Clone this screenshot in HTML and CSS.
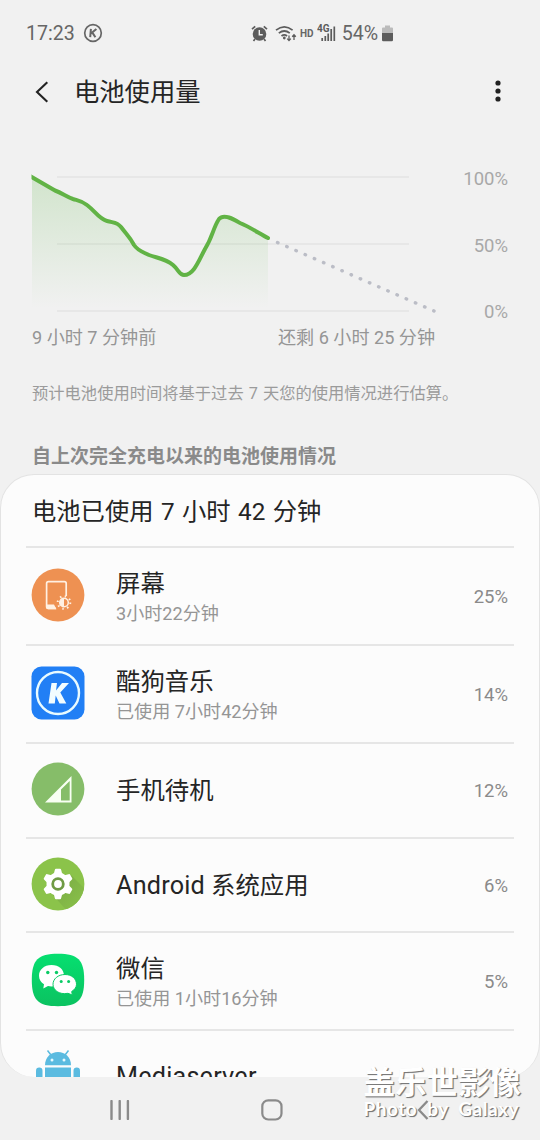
FILE: index.html
```html
<!DOCTYPE html>
<html lang="zh-CN">
<head>
    <meta charset="UTF-8">
    <title>电池使用量</title>
    <meta name="viewport" content="width=device-width, initial-scale=1">
    <link rel="stylesheet" href="styles.css">
</head>
<body>
    <header class="status-bar">
        <span class="clock">17:23</span>
        <svg class="kugou-status" width="20" height="20" viewBox="0 0 20 20">
            <circle cx="10" cy="10" r="8.3" fill="none" stroke="#666" stroke-width="1.7"/>
            <path d="M7.9 5.8L7.2 14.2M13.4 6L7.9 10.6M9.4 9.6L12.4 14.2" fill="none" stroke="#666" stroke-width="2"/>
        </svg>
        <div class="status-right">
            <svg width="17" height="17" viewBox="0 0 17 17">
                <circle cx="8.5" cy="9" r="6.8" fill="#5c5c5c"/>
                <path d="M1 4.2L4.2 1.4M16 4.2L12.8 1.4M4 14L2.5 16M13 14L14.5 16" stroke="#5c5c5c" stroke-width="1.7"/>
                <path d="M8.3 5V9.7H11.8" fill="none" stroke="#f1f1f1" stroke-width="1.4"/>
            </svg>
            <svg class="wifi" width="22" height="17" viewBox="0 0 22 17">
                <g fill="none" stroke="#5c5c5c" stroke-width="1.7">
                    <path d="M1 5.2Q9.3 -1.6 17.6 5.2"/>
                    <path d="M3.8 8.2Q9.3 3.8 14.8 8.2"/>
                    <path d="M6.5 11Q9.3 8.8 12.1 11"/>
                </g>
                <circle cx="9.3" cy="13" r="1.4" fill="#5c5c5c"/>
                <path d="M14 10.5V15.4M12.2 13.6L14 15.6L15.8 13.6M19 15V9.8M17.2 11.7L19 9.7L20.8 11.7" fill="none" stroke="#5c5c5c" stroke-width="1.3"/>
            </svg>
            <span class="hd">HD</span>
            <svg class="signal" width="19" height="18" viewBox="0 0 19 18">
                <text x="0" y="8" class="net-type">4G</text>
                <path d="M5.2 14V17M8.3 12V17M11.2 9.5V17M14.2 5V17M17.3 2.5V17" stroke="#5c5c5c" stroke-width="1.7"/>
            </svg>
            <span class="level">54%</span>
            <svg width="11" height="17" viewBox="0 0 11 17">
                <path d="M3 0.5H8V2.5H10Q11 2.5 11 3.5V8H0V3.5Q0 2.5 1 2.5H3Z" fill="#bbb"/>
                <path d="M0 8H11V15Q11 16.3 9.7 16.3H1.3Q0 16.3 0 15Z" fill="#5c5c5c"/>
            </svg>
        </div>
    </header>

    <nav class="title-bar">
        <svg width="14" height="22" viewBox="0 0 14 22">
            <path d="M12.3 1.2L2 11L12.3 20.8" fill="none" stroke="#222" stroke-width="2.1"/>
        </svg>
        <h1 class="title">电池使用量</h1>
        <svg class="more" width="6" height="22" viewBox="0 0 6 22">
            <circle cx="3" cy="3" r="2.6" fill="#222"/>
            <circle cx="3" cy="11" r="2.6" fill="#222"/>
            <circle cx="3" cy="19" r="2.6" fill="#222"/>
        </svg>
    </nav>

    <section class="chart">
        <svg width="408" height="150" viewBox="30 168 408 150">
            <defs>
                <linearGradient id="fade" x1="0" y1="176" x2="0" y2="308" gradientUnits="userSpaceOnUse">
                    <stop offset="0" stop-color="#61b74a" stop-opacity="0.22"/>
                    <stop offset="1" stop-color="#61b74a" stop-opacity="0"/>
                </linearGradient>
                <clipPath id="plot"><rect x="31.5" y="168" width="407" height="150"/></clipPath>
            </defs>
            <path d="M57 177H409M57 244H409M57 311H409" stroke="#e3e3e3" stroke-width="1.3"/>
            <path d="M32 177L55 190.500C62 193 67 197 73 199C80 201 82 201 87 205C95 211 99 219 107 221C114 223 117 222 121 227C127 235 130 237 134 245C138 251 143 252 149 255C157 258 166 259 173 265C179 270 179 275 184 275C194 275 199 260 205 249C213 236 213 228 219 219C224 213 235 220 240 223C250 227 260 234 268 238V308H32Z" fill="url(#fade)"/>
            <path clip-path="url(#plot)" d="M30 176L55 190.500C62 193 67 197 73 199C80 201 82 201 87 205C95 211 99 219 107 221C114 223 117 222 121 227C127 235 130 237 134 245C138 251 143 252 149 255C157 258 166 259 173 265C179 270 179 275 184 275C194 275 199 260 205 249C213 236 213 228 219 219C224 213 235 220 240 223C250 227 260 234 268 238" fill="none" stroke="#61b345" stroke-width="4" stroke-linecap="round" stroke-linejoin="round"/>
            <path d="M277.500 242.500L434 311" fill="none" stroke="#bbbdc6" stroke-width="3.4" stroke-linecap="round" stroke-dasharray="0.5 9.530"/>
        </svg>
        <div class="y-axis">
            <span>100%</span>
            <span>50%</span>
            <span>0%</span>
        </div>
    </section>
    <div class="x-axis">
        <span>9 小时 7 分钟前</span>
        <span>还剩 6 小时 25 分钟</span>
    </div>
    <p class="estimate">预计电池使用时间将基于过去 7 天您的使用情况进行估算。</p>
    <h2 class="section-title">自上次完全充电以来的电池使用情况</h2>

    <main class="card">
        <div class="card-title">电池已使用 7 小时 42 分钟</div>
        <div class="row">
            <svg class="icon" viewBox="0 0 54 54">
                <circle cx="27" cy="27" r="26.4" fill="#ee9152"/>
                <path d="M35.200 28V15.500Q35.200 13.600 33.300 13.600H17.500Q15.600 13.600 15.600 15.500V38.500Q15.600 40.400 17.500 40.400H25" fill="none" stroke="#fff0e2" stroke-width="1.7"/>
                <path d="M15 36.500H23L25.500 41.200H17Q15 41.200 15 39Z" fill="#fff0e2"/>
                <circle cx="33" cy="34.500" r="4.300" fill="none" stroke="#fff0e2" stroke-width="1.500"/>
                <path d="M33 30.200A4.300 4.300 0 0 0 33 38.800Z" fill="#fff0e2"/>
                <circle cx="33" cy="34.500" r="6.300" fill="none" stroke="#fff0e2" stroke-width="2" stroke-dasharray="1.500 3.448"/>
            </svg>
            <div class="info">
                <div class="name">屏幕</div>
                <div class="sub">3小时22分钟</div>
            </div>
            <span class="percent">25%</span>
        </div>
        <div class="row">
            <svg class="icon" viewBox="0 0 54 54">
                <rect x="0.500" y="0.500" width="53" height="53" rx="10" fill="#217ff5"/>
                <circle cx="27" cy="27" r="21" fill="none" stroke="#e9fbff" stroke-width="2.400"/>
                <path d="M20.500 17H26L25 24.500L31 17H38L29.300 26.600L35.300 37.500H28.500L24.700 29.500L23.800 37.500H17.500Z" fill="#f2fdff"/>
            </svg>
            <div class="info">
                <div class="name">酷狗音乐</div>
                <div class="sub">已使用 7小时42分钟</div>
            </div>
            <span class="percent">14%</span>
        </div>
        <div class="row short">
            <svg class="icon" viewBox="0 0 54 54">
                <circle cx="27" cy="27" r="26.400" fill="#86bd69"/>
                <path fill-rule="evenodd" d="M14 40.500L40.500 14V40.500ZM30 27.500V38.500H38.700V18.900Z" fill="#f8fff3"/>
            </svg>
            <div class="info">
                <div class="name">手机待机</div>
            </div>
            <span class="percent">12%</span>
        </div>
        <div class="row short">
            <svg class="icon" viewBox="0 0 54 54">
                <defs>
                    <clipPath id="disc"><circle cx="27" cy="27" r="26.400"/></clipPath>
                    <linearGradient id="shadow" x1="0" y1="0" x2="1" y2="1">
                        <stop offset="0.2" stop-color="#7cae45"/>
                        <stop offset="1" stop-color="#8bc34a"/>
                    </linearGradient>
                </defs>
                <circle cx="27" cy="27" r="26.400" fill="#8bc34a"/>
                <path clip-path="url(#disc)" d="M40 18L54 32V54H36L22 38Z" fill="url(#shadow)"/>
                <g fill="#fff">
                    <circle cx="27" cy="27" r="11.500"/>
                    <g id="teeth">
                        <path d="M25 11.800H29Q30 11.800 30.200 13L31.500 18H22.500L23.800 13Q24 11.800 25 11.800Z"/>
                        <path d="M25 42.200H29Q30 42.200 30.200 41L31.500 36H22.500L23.800 41Q24 42.200 25 42.200Z"/>
                    </g>
                    <use href="#teeth" transform="rotate(60 27 27)"/>
                    <use href="#teeth" transform="rotate(120 27 27)"/>
                </g>
                <circle cx="27" cy="27" r="5.300" fill="none" stroke="#6f9b44" stroke-width="2.800"/>
            </svg>
            <div class="info">
                <div class="name"><span class="latin">Android</span> 系统应用</div>
            </div>
            <span class="percent">6%</span>
        </div>
        <div class="row">
            <svg class="icon" viewBox="0 0 54 54">
                <defs>
                    <linearGradient id="wechat" x1="0" y1="0" x2="0" y2="1">
                        <stop offset="0" stop-color="#06df70"/>
                        <stop offset="1" stop-color="#0bc260"/>
                    </linearGradient>
                </defs>
                <path d="M27 0.800C47 0.800 53.200 7 53.200 27S47 53.200 27 53.200S0.800 47 0.800 27S7 0.800 27 0.800Z" fill="url(#wechat)"/>
                <path d="M20.500 12C13 12 8 16.800 8 22.800C8 26.500 10 29.500 13 31.300L12.300 35.500L17 33C25 34.800 33 30 33 22.800C33 16.500 28 12 20.500 12Z" fill="#fff"/>
                <path d="M34 21.500C27 21.500 22 26 22 31.300C22 37 28 42 37 40.300L41.300 42L40.700 38.500C43.500 36.800 45.500 34.300 45.500 31.300C45.500 26 41 21.500 34 21.500Z" fill="#fff" stroke="#0acb65" stroke-width="1"/>
                <g fill="#0acb65">
                    <circle cx="16.800" cy="19.500" r="1.700"/>
                    <circle cx="25.500" cy="19.500" r="1.700"/>
                    <circle cx="30.200" cy="28.500" r="1.500"/>
                    <circle cx="37.600" cy="28.500" r="1.500"/>
                </g>
            </svg>
            <div class="info">
                <div class="name">微信</div>
                <div class="sub">已使用 1小时16分钟</div>
            </div>
            <span class="percent">5%</span>
        </div>
        <div class="row last">
            <svg class="icon" viewBox="0 0 54 54">
                <g fill="#5bbbe0">
                    <path d="M14 17.300C14 9 20 4 27 4S40 9 40 17.300Z"/>
                    <path d="M14 19.500H40V42H14Z"/>
                    <rect x="5" y="19.500" width="6.500" height="20" rx="3.200"/>
                    <rect x="42.500" y="19.500" width="6.500" height="20" rx="3.200"/>
                </g>
                <path d="M16.500 2.500L20 7M37.500 2.500L34 7" stroke="#5bbbe0" stroke-width="1.500"/>
                <circle cx="21" cy="12" r="1.500" fill="#e6faff"/>
                <circle cx="33" cy="12" r="1.500" fill="#e6faff"/>
            </svg>
            <div class="info">
                <div class="name"><span class="latin">Mediaserver</span></div>
            </div>
            <span class="percent">4%</span>
        </div>
    </main>

    <footer class="nav-bar">
        <svg width="20" height="20" viewBox="0 0 20 20">
            <path d="M1.500 1V19M9.700 1V19M17.900 1V19" stroke="#8a8a8a" stroke-width="2.400" stroke-linecap="round"/>
        </svg>
        <svg class="home" width="22" height="22" viewBox="0 0 22 22">
            <rect x="1.300" y="1.300" width="19.200" height="19.200" rx="6" fill="none" stroke="#8a8a8a" stroke-width="2.200"/>
        </svg>
        <svg width="12" height="20" viewBox="0 0 12 20">
            <path d="M10.500 1L2 10L10.500 19" fill="none" stroke="#8a8a8a" stroke-width="2.300"/>
        </svg>
    </footer>
    <div class="watermark">
        <div class="mark-cn">盖乐世影像</div>
        <div class="mark-en">Photo by Galaxy</div>
    </div>
</body>
</html>
```

FILE: styles.css
```css
* {
    box-sizing: border-box;
}

body {
    display: flex;
    flex-direction: column;
    position: relative;
    width: 540px;
    height: 1140px;
    margin: 0;
    overflow: hidden;
    background-color: #f1f1f1;
    font-family: Roboto, "Noto Sans CJK SC", sans-serif;
    color: #252525;
}

svg {
    display: block;
    flex: none;
}

/* Status bar */
.status-bar {
    display: flex;
    align-items: center;
    height: 66px;
    padding: 0 147px 0 26px;
    color: #666;
    font-size: 19.6px;
}

.clock,
.level {
    padding-top: 1px;
    font-weight: 370;
}

.kugou-status {
    margin-left: 8px;
}

.status-right {
    display: flex;
    align-items: center;
    margin-left: auto;
}

.wifi {
    margin-left: 7px;
}

.hd {
    margin-left: 3px;
    font-size: 10px;
    font-weight: 700;
}

.signal {
    margin-left: 3px;
}

.net-type {
    font-size: 10px;
    font-weight: 700;
    fill: #5c5c5c;
}

.level {
    margin: 0 4px 0 6px;
}

/* Title */
.title-bar {
    display: flex;
    align-items: center;
    height: 52px;
    padding: 0 39px 0 35px;
}

.title {
    margin: 2px 0 0 25px;
    font-size: 25.3px;
    font-weight: 400;
    line-height: 36px;
}

.more {
    margin: 0 0 2px auto;
}

/* Chart */
.chart {
    display: flex;
    justify-content: space-between;
    height: 150px;
    margin-top: 50px;
    padding: 0 32px 0 30px;
}

.y-axis {
    display: flex;
    flex-direction: column;
    justify-content: space-between;
    height: 155px;
    padding-top: 1px;
    color: #a8a8a8;
    font-size: 18.5px;
    line-height: 21px;
    text-align: right;
}

.x-axis {
    display: flex;
    justify-content: space-between;
    margin-top: 7px;
    padding: 0 105px 0 32px;
    color: #959595;
    font-size: 18.1px;
    line-height: 26px;
}

.estimate {
    margin: 31px 0 0 32px;
    color: #9b9b9b;
    font-size: 16.3px;
    line-height: 24px;
    word-spacing: 1px;
}

.section-title {
    margin: 38px 0 0 32px;
    color: #8a8a8a;
    font-size: 19px;
    font-weight: 700;
    line-height: 26px;
}

/* App list */
.card {
    height: 603px;
    margin-top: 4px;
    padding: 0 25px;
    overflow: hidden;
    background-color: #fcfcfc;
    border: 1px solid #e3e3e3;
    border-bottom: none;
    border-radius: 34px;
}

.card-title {
    height: 71px;
    padding-left: 6px;
    font-size: 24.3px;
    line-height: 73px;
    word-spacing: 1.4px;
}

.row {
    display: flex;
    align-items: center;
    height: 98px;
    padding: 2px 6px 0 5px;
    border-top: 2px solid #e6e6e6;
}

.short {
    height: 94.5px;
}

.last {
    height: 92px;
}

.icon {
    width: 54px;
    height: 54px;
    margin-bottom: 4px;
}

.info {
    margin-left: 31px;
}

.name {
    font-size: 24.4px;
    line-height: 34px;
}

.latin {
    font-size: 25.2px;
    letter-spacing: 0.2px;
}

.sub {
    color: #959595;
    font-size: 18.1px;
    line-height: 26px;
}

.percent {
    margin-left: auto;
    color: #8a8a8a;
    font-size: 18.5px;
}

/* Bottom bar */
.nav-bar {
    display: flex;
    align-items: center;
    justify-content: space-between;
    height: 63px;
    padding: 3px 111px 0 110px;
}

.home {
    margin-right: 3px;
}

.watermark {
    position: absolute;
    right: 19px;
    bottom: 21px;
    color: #fff;
    text-shadow: 1px 1px 1px #777, 1px 1px 0 #999;
}

.mark-cn {
    font-size: 31.5px;
    font-weight: 700;
    line-height: 31px;
}

.mark-en {
    font-family: Lato, sans-serif;
    font-size: 19px;
    font-weight: 700;
    line-height: 20px;
    letter-spacing: 0.5px;
    word-spacing: 5px;
}
```
